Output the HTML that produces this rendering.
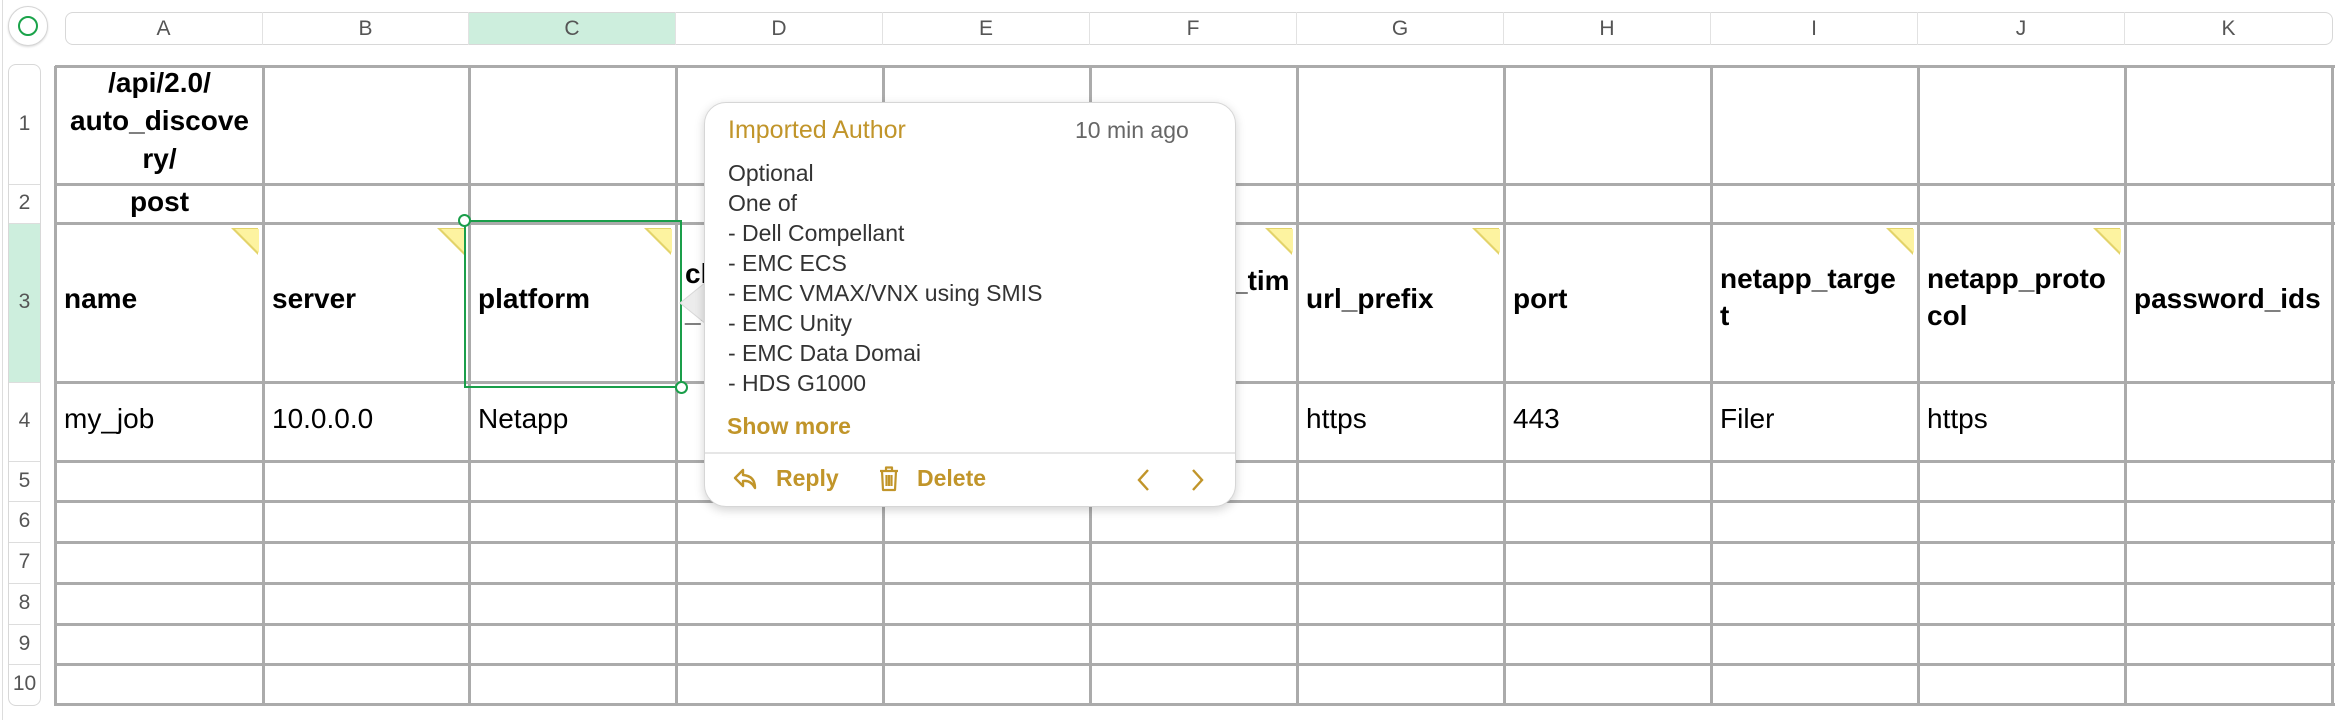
<!DOCTYPE html>
<html><head><meta charset="utf-8"><style>
*{margin:0;padding:0;box-sizing:border-box}
body{width:2336px;height:720px;background:#fff;position:relative;overflow:hidden;font-family:"Liberation Sans",sans-serif}
.a{position:absolute}
.vl{position:absolute;top:66px;height:640px;width:3px;background:#ababab}
.hl{position:absolute;left:55px;width:2280px;height:3px;background:#ababab}
.ch{position:absolute;top:12px;height:33px;font-size:21px;color:#555;text-align:center;line-height:33px;border-right:1px solid #e2e2e2}
.rn{position:absolute;left:8px;width:33px;font-size:21px;color:#555;text-align:center}
.t{position:absolute;font-size:28px;color:#000;white-space:nowrap}
.b{font-weight:bold}
.tri{position:absolute;width:0;height:0;border-top:27px solid #e3d36a;border-left:27px solid transparent}
.tri:after{content:"";position:absolute;top:-26px;left:-23px;width:0;height:0;border-top:24px solid #fdf3a0;border-left:24px solid transparent}
.pl{font-size:23px;color:#333;position:absolute;left:728px;white-space:nowrap}
.gold{color:#c1952a}
</style></head><body>
<div class="a" style="left:2px;top:0;width:1px;height:720px;background:#ddd"></div>
<div class="a" style="left:8px;top:6px;width:40px;height:40px;border-radius:50%;border:1px solid #d5d5d5;background:#fff;box-shadow:0 1px 2px rgba(0,0,0,.15)"></div>
<div class="a" style="left:18px;top:16px;width:20px;height:20px;border-radius:50%;border:2.5px solid #1aa34a"></div>
<div class="a" style="left:65px;top:12px;width:2268px;height:33px;border:1px solid #d8d8d8;border-radius:8px;background:#fff"></div>
<div class="a" style="left:469px;top:13px;width:207px;height:31px;background:#cdeedd"></div>
<div class="ch" style="left:65px;width:198px">A</div>
<div class="ch" style="left:263px;width:206px">B</div>
<div class="ch" style="left:469px;width:207px">C</div>
<div class="ch" style="left:676px;width:207px">D</div>
<div class="ch" style="left:883px;width:207px">E</div>
<div class="ch" style="left:1090px;width:207px">F</div>
<div class="ch" style="left:1297px;width:207px">G</div>
<div class="ch" style="left:1504px;width:207px">H</div>
<div class="ch" style="left:1711px;width:207px">I</div>
<div class="ch" style="left:1918px;width:207px">J</div>
<div class="ch" style="left:2125px;width:207px;border-right:none">K</div>
<div class="a" style="left:8px;top:64px;width:33px;height:642px;border:1px solid #d8d8d8;border-radius:8px;background:#fff"></div>
<div class="a" style="left:9px;top:223px;width:31px;height:159px;background:#cdeedd"></div>
<div class="a" style="left:9px;top:184px;width:31px;height:1px;background:#ddd"></div>
<div class="a" style="left:9px;top:223px;width:31px;height:1px;background:#ddd"></div>
<div class="a" style="left:9px;top:382px;width:31px;height:1px;background:#ddd"></div>
<div class="a" style="left:9px;top:461px;width:31px;height:1px;background:#ddd"></div>
<div class="a" style="left:9px;top:501px;width:31px;height:1px;background:#ddd"></div>
<div class="a" style="left:9px;top:542px;width:31px;height:1px;background:#ddd"></div>
<div class="a" style="left:9px;top:583px;width:31px;height:1px;background:#ddd"></div>
<div class="a" style="left:9px;top:624px;width:31px;height:1px;background:#ddd"></div>
<div class="a" style="left:9px;top:664px;width:31px;height:1px;background:#ddd"></div>
<div class="rn" style="top:112px">1</div>
<div class="rn" style="top:191px">2</div>
<div class="rn" style="top:290px">3</div>
<div class="rn" style="top:409px">4</div>
<div class="rn" style="top:469px">5</div>
<div class="rn" style="top:509px">6</div>
<div class="rn" style="top:550px">7</div>
<div class="rn" style="top:591px">8</div>
<div class="rn" style="top:632px">9</div>
<div class="rn" style="top:672px">10</div>
<div class="vl" style="left:54px"></div><div class="vl" style="left:262px"></div><div class="vl" style="left:468px"></div><div class="vl" style="left:675px"></div><div class="vl" style="left:882px"></div><div class="vl" style="left:1089px"></div><div class="vl" style="left:1296px"></div><div class="vl" style="left:1503px"></div><div class="vl" style="left:1710px"></div><div class="vl" style="left:1917px"></div><div class="vl" style="left:2124px"></div><div class="vl" style="left:2331px"></div>
<div class="hl" style="top:65px"></div><div class="hl" style="top:183px"></div><div class="hl" style="top:222px"></div><div class="hl" style="top:381px"></div><div class="hl" style="top:460px"></div><div class="hl" style="top:500px"></div><div class="hl" style="top:541px"></div><div class="hl" style="top:582px"></div><div class="hl" style="top:623px"></div><div class="hl" style="top:663px"></div><div class="hl" style="top:703px"></div>
<div class="t b" style="left:57px;width:205px;top:64px;text-align:center;line-height:38px">/api/2.0/<br>auto_discove<br>ry/</div>
<div class="t b" style="left:57px;width:205px;top:183px;text-align:center;line-height:38px">post</div>
<div class="t b" style="left:64px;top:283px">name</div>
<div class="t b" style="left:272px;top:283px">server</div>
<div class="t b" style="left:478px;top:283px">platform</div>
<div class="t b" style="left:685px;top:258px">cluster</div>
<div class="t b" style="left:685px;top:296px">_x</div>
<div class="t b" style="left:1232px;top:265px">_tim</div>
<div class="t b" style="left:1100px;top:303px">e</div>
<div class="t b" style="left:1306px;top:283px">url_prefix</div>
<div class="t b" style="left:1513px;top:283px">port</div>
<div class="t b" style="left:1720px;top:263px">netapp_targe</div>
<div class="t b" style="left:1720px;top:300px">t</div>
<div class="t b" style="left:1927px;top:263px">netapp_proto</div>
<div class="t b" style="left:1927px;top:300px">col</div>
<div class="t b" style="left:2134px;top:283px">password_ids</div>
<div class="tri" style="left:231px;top:228px"></div>
<div class="tri" style="left:437px;top:228px"></div>
<div class="tri" style="left:644px;top:228px"></div>
<div class="tri" style="left:1265px;top:228px"></div>
<div class="tri" style="left:1472px;top:228px"></div>
<div class="tri" style="left:1886px;top:228px"></div>
<div class="tri" style="left:2093px;top:228px"></div>
<div class="t" style="left:64px;top:403px">my_job</div>
<div class="t" style="left:272px;top:403px">10.0.0.0</div>
<div class="t" style="left:478px;top:403px">Netapp</div>
<div class="t" style="left:1306px;top:403px">https</div>
<div class="t" style="left:1513px;top:403px">443</div>
<div class="t" style="left:1720px;top:403px">Filer</div>
<div class="t" style="left:1927px;top:403px">https</div>
<div class="a" style="left:464px;top:220px;width:218px;height:168px;border:2px solid #1a9e4a"></div>
<div class="a" style="left:458px;top:214px;width:13px;height:13px;border-radius:50%;border:2px solid #1a9e4a;background:#fff"></div>
<div class="a" style="left:675px;top:381px;width:13px;height:13px;border-radius:50%;border:2px solid #1a9e4a;background:#fff"></div>
<svg class="a" style="left:678px;top:282px" width="30" height="42"><path d="M28 0 L2 21 L28 42 Z" fill="#ececec" stroke="#d8d8d8"/></svg>
<div class="a" style="left:704px;top:102px;width:532px;height:405px;background:#fff;border:1px solid #d6d6d6;border-radius:22px;box-shadow:0 3px 10px rgba(0,0,0,.18)"></div>
<div class="pl gold" style="top:116px;font-size:25px">Imported Author</div>
<div class="a" style="left:1075px;top:117px;font-size:23px;color:#666">10 min ago</div>
<div class="pl" style="top:160px">Optional</div>
<div class="pl" style="top:190px">One of</div>
<div class="pl" style="top:220px">- Dell Compellant</div>
<div class="pl" style="top:250px">- EMC ECS</div>
<div class="pl" style="top:280px">- EMC VMAX/VNX using SMIS</div>
<div class="pl" style="top:310px">- EMC Unity</div>
<div class="pl" style="top:340px">- EMC Data Domai</div>
<div class="pl" style="top:370px">- HDS G1000</div>
<div class="pl gold" style="top:413px;left:727px;font-weight:bold">Show more</div>
<div class="a" style="left:705px;top:452px;width:530px;height:2px;background:#e6e6e6"></div>
<svg class="a" style="left:733px;top:467px" width="26" height="24" viewBox="0 0 26 24"><path d="M10 3 L2 11 L10 19 L10 14 Q18 13 22 21 Q22 9 10 8 Z" fill="none" stroke="#c1952a" stroke-width="2.4" stroke-linejoin="round"/></svg>
<div class="a gold" style="left:776px;top:465px;font-size:23px;font-weight:bold">Reply</div>
<svg class="a" style="left:878px;top:465px" width="22" height="28" viewBox="0 0 22 28"><path d="M2 6 H20 M8 6 V2.5 H14 V6 M4 6 L5 25 H17 L18 6 M8.5 10 V21 M11 10 V21 M13.5 10 V21" fill="none" stroke="#c1952a" stroke-width="2.2" stroke-linejoin="round"/></svg>
<div class="a gold" style="left:917px;top:465px;font-size:23px;font-weight:bold">Delete</div>
<svg class="a" style="left:1134px;top:467px" width="20" height="26"><path d="M14 3 L5 13 L14 23" fill="none" stroke="#c1952a" stroke-width="2.4"/></svg>
<svg class="a" style="left:1187px;top:467px" width="20" height="26"><path d="M6 3 L15 13 L6 23" fill="none" stroke="#c1952a" stroke-width="2.4"/></svg>
</body></html>
